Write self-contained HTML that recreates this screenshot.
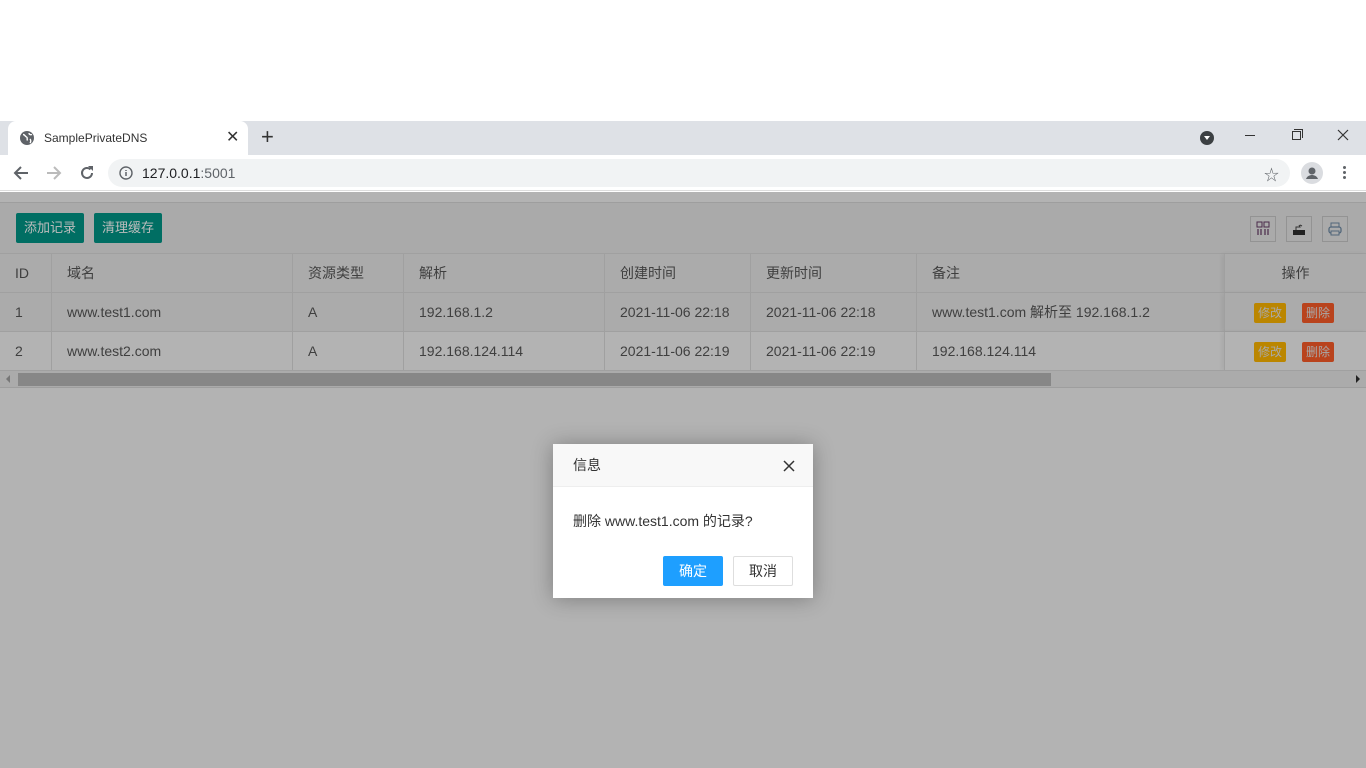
<!DOCTYPE html>
<html><head><meta charset="utf-8"><style>
*{margin:0;padding:0;box-sizing:border-box}
body{width:1366px;height:768px;overflow:hidden;background:#fff;font-family:"Liberation Sans","Noto Sans CJK SC",sans-serif;position:relative}
.a{position:absolute}
.tabbar{top:121px;left:0;width:1366px;height:34px;background:#dee1e6}
.tab{top:121px;left:8px;width:240px;height:34px;background:#fff;border-radius:8px 8px 0 0}
.omni{top:155px;left:0;width:1366px;height:36px;background:#fff;border-bottom:1px solid #ddd}
.url{top:159px;left:108px;width:1182px;height:28px;background:#f1f3f4;border-radius:14px}
.page{top:192px;left:0;width:1366px;height:576px;background:#b3b3b3}
.panel{top:202px;left:0;width:1366px;height:186px;background:#aaa;border-top:1px solid #9e9e9e;border-bottom:1px solid #9e9e9e}
.btn{height:30px;background:#006e63;color:#bdbdbd;font-size:13px;line-height:30px;text-align:center;border-radius:2px;top:213px}
.ib{top:216px;width:26px;height:26px;border:1px solid #939393}
.row{left:0;width:1366px;height:39px;border-top:1px solid #a0a0a0;font-size:14px;color:#3f3f3f}
.c{position:absolute;top:0;height:39px;line-height:38px;padding-left:15px;border-left:1px solid #a0a0a0;white-space:nowrap}
.op{position:absolute;top:0;right:0;width:142px;height:39px;border-left:1px solid #a0a0a0;box-shadow:-2px 0 4px rgba(0,0,0,.06)}
.sb{font-size:12px;line-height:20px;height:20px;width:32px;text-align:center;color:#a9a9a9;top:10px;position:absolute;border-radius:2px}
.dlg{top:444px;left:553px;width:260px;height:154px;background:#fff;box-shadow:0 1px 20px rgba(0,0,0,.3)}
</style></head><body>
<div class="a tabbar"></div>
<div class="a tab"></div>
<svg class="a" style="left:20px;top:131px" width="14" height="14" viewBox="0 0 14 14"><circle cx="7" cy="7" r="7" fill="#5f6368"/><path d="M3 3.5c2 0 2 2 3.5 2.5s0 2.5 1 3.5M9 2c0 1.5 1.5 2 3 1.5M10 8c1 1 1 3 0 4" stroke="#fff" stroke-width="1.4" fill="none"/></svg>
<div class="a" style="left:44px;top:131px;font-size:12px;color:#333">SamplePrivateDNS</div>
<div class="a" style="left:226px;top:127px;font-size:16px;color:#333">✕</div>
<div class="a" style="left:261px;top:124px;font-size:22px;color:#333">+</div>
<svg class="a" style="left:1200px;top:131px" width="14" height="14"><circle cx="7" cy="7" r="7" fill="#3c4043"/><path d="M4 5h6l-3 4z" fill="#fff"/></svg>
<div class="a" style="left:1245px;top:135px;width:10px;height:1px;background:#333"></div>
<div class="a" style="left:1292px;top:131px;width:9px;height:9px;border:1px solid #333"></div>
<div class="a" style="left:1294px;top:129px;width:9px;height:9px;border-top:1px solid #333;border-right:1px solid #333"></div>
<svg class="a" style="left:1337px;top:129px" width="12" height="12"><path d="M1 1l10 10M11 1L1 11" stroke="#333" stroke-width="1.2"/></svg>
<div class="a omni"></div>
<div class="a url"></div>
<svg class="a" style="left:13px;top:165px" width="16" height="16"><path d="M15 8H2M8 2L2 8l6 6" stroke="#5f6368" stroke-width="2" fill="none"/></svg>
<svg class="a" style="left:46px;top:165px" width="16" height="16"><path d="M1 8h13M8 2l6 6-6 6" stroke="#bbb" stroke-width="2" fill="none"/></svg>
<svg class="a" style="left:79px;top:165px" width="16" height="16"><path d="M13 8a5 5 0 1 1-1.5-3.6" stroke="#5f6368" stroke-width="2" fill="none"/><path d="M9 1h5v5z" fill="#5f6368"/></svg>
<svg class="a" style="left:119px;top:166px" width="14" height="14"><circle cx="7" cy="7" r="6" stroke="#5f6368" stroke-width="1.4" fill="none"/><path d="M7 6v4M7 4v1" stroke="#5f6368" stroke-width="1.5"/></svg>
<div class="a" style="left:142px;top:165px;font-size:14px;color:#202124">127.0.0.1<span style="color:#5f6368">:5001</span></div>
<div class="a" style="left:1264px;top:164px;font-size:15px;color:#5f6368">☆</div>
<svg class="a" style="left:1301px;top:162px" width="22" height="22"><circle cx="11" cy="11" r="11" fill="#dadce0"/><circle cx="11" cy="9" r="3.5" fill="#5f6368"/><path d="M5 17c1-3 4-4 6-4s5 1 6 4z" fill="#5f6368"/></svg>
<div class="a" style="left:1343px;top:166px;width:3px;height:3px;background:#5f6368;border-radius:50%;box-shadow:0 5px 0 #5f6368,0 10px 0 #5f6368"></div>
<div class="a page"></div>
<div class="a panel"></div>
<div class="a btn" style="left:16px;width:68px">添加记录</div>
<div class="a btn" style="left:94px;width:68px">清理缓存</div>
<div class="a ib" style="left:1250px"><svg width="24" height="24"><rect x="6" y="5" width="5" height="5" fill="none" stroke="#4a2a4a"/><rect x="13" y="5" width="5" height="5" fill="none" stroke="#4a2a4a"/><path d="M7 12v6M10 12v6M14 12v6M17 12v6" stroke="#4a2a4a" stroke-width="1.2"/></svg></div>
<div class="a ib" style="left:1286px"><svg width="24" height="24"><path d="M6 13h12v5H6z" fill="#222"/><path d="M9 13v-3h4l-1-2M13 8l2 1" stroke="#333" fill="none"/></svg></div>
<div class="a ib" style="left:1322px"><svg width="24" height="24"><rect x="6" y="10" width="12" height="6" rx="2" fill="none" stroke="#51667a" stroke-width="1.3"/><rect x="8" y="6" width="8" height="4" fill="none" stroke="#51667a"/><rect x="8" y="14" width="8" height="4" fill="#aaa" stroke="#51667a"/></svg></div>

<div class="a row" style="top:253px;background:#ababab">
<div class="c" style="left:0;border:none">ID</div><div class="c" style="left:51px">域名</div><div class="c" style="left:292px">资源类型</div><div class="c" style="left:403px">解析</div><div class="c" style="left:604px">创建时间</div><div class="c" style="left:750px">更新时间</div><div class="c" style="left:916px">备注</div>
<div class="op" style="text-align:center;line-height:38px">操作</div></div>
<div class="a row" style="top:292px;background:#ababab">
<div class="c" style="left:0;border:none">1</div><div class="c" style="left:51px">www.test1.com</div><div class="c" style="left:292px">A</div><div class="c" style="left:403px">192.168.1.2</div><div class="c" style="left:604px">2021-11-06 22:18</div><div class="c" style="left:750px">2021-11-06 22:18</div><div class="c" style="left:916px">www.test1.com 解析至 192.168.1.2</div>
<div class="op"><span class="sb" style="left:29px;background:#bb8600">修改</span><span class="sb" style="left:77px;background:#b9431d">删除</span></div></div>
<div class="a row" style="top:331px;background:#b3b3b3">
<div class="c" style="left:0;border:none">2</div><div class="c" style="left:51px">www.test2.com</div><div class="c" style="left:292px">A</div><div class="c" style="left:403px">192.168.124.114</div><div class="c" style="left:604px">2021-11-06 22:19</div><div class="c" style="left:750px">2021-11-06 22:19</div><div class="c" style="left:916px">192.168.124.114</div>
<div class="op"><span class="sb" style="left:29px;background:#bb8600">修改</span><span class="sb" style="left:77px;background:#b9431d">删除</span></div></div>
<div class="a" style="top:370px;left:0;width:1366px;height:17px;background:#ababab;border-top:1px solid #a0a0a0"></div>
<div class="a" style="top:373px;left:18px;width:1033px;height:13px;background:#878787"></div>
<div class="a" style="top:375px;left:6px;width:0;height:0;border:4px solid transparent;border-right:4px solid #777;border-left:none"></div>
<div class="a" style="top:375px;left:1356px;width:0;height:0;border:4px solid transparent;border-left:4px solid #222;border-right:none"></div>

<div class="a dlg">
<div style="height:43px;background:#f8f8f8;border-bottom:1px solid #eee;font-size:14px;color:#333;line-height:43px;padding-left:20px">信息</div>
<svg style="position:absolute;left:230px;top:16px" width="12" height="12"><path d="M1 1l10 10M11 1L1 11" stroke="#333" stroke-width="1.5"/></svg>
<div style="position:absolute;left:20px;top:67px;font-size:14px;color:#333">删除 www.test1.com 的记录?</div>
<div style="position:absolute;left:110px;top:112px;width:60px;height:30px;background:#1e9fff;color:#fff;font-size:14px;line-height:30px;text-align:center;border-radius:2px">确定</div>
<div style="position:absolute;left:180px;top:112px;width:60px;height:30px;border:1px solid #dedede;color:#333;font-size:14px;line-height:28px;text-align:center;border-radius:2px">取消</div>
</div>
</body></html>
